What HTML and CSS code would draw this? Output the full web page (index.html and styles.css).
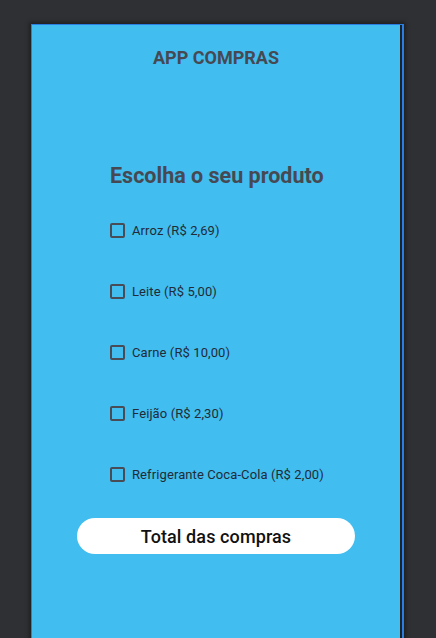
FILE: index.html
```html
<!DOCTYPE html>
<html lang="pt-BR">
<head>
<meta charset="utf-8">
<title>App Compras</title>
<link rel="stylesheet" href="styles.css">
</head>
<body>
<div class="frame">
  <div class="screen">
    <h1 class="app-title">APP COMPRAS</h1>
    <div class="content">
      <h2 class="section-title">Escolha o seu produto</h2>
      <ul class="products">
        <li class="product"><span class="box"></span><span class="label">Arroz (R$ 2,69)</span></li>
        <li class="product"><span class="box"></span><span class="label">Leite (R$ 5,00)</span></li>
        <li class="product"><span class="box"></span><span class="label">Carne (R$ 10,00)</span></li>
        <li class="product"><span class="box"></span><span class="label">Feijão (R$ 2,30)</span></li>
        <li class="product"><span class="box"></span><span class="label">Refrigerante Coca-Cola (R$ 2,00)</span></li>
      </ul>
    </div>
    <button class="total-btn">Total das compras</button>
  </div>
</div>
</body>
</html>
```

FILE: styles.css
```css
html, body {
  margin: 0;
  padding: 0;
  height: 638px;
  overflow: hidden;
  background: #2f3033;
  font-family: Roboto, "Liberation Sans", sans-serif;
}

.frame {
  margin: 24px 0 0 31px;
  width: 370px;
  height: 640px;
  border: 1px solid #2a7de1;
  border-right-width: 2px;
  border-bottom: none;
  box-shadow: 0 0 4px 2px rgba(0, 0, 0, 0.35);
}

.screen {
  height: 100%;
  background: #41bdef;
  border-right: 2px solid #1f2124;
  display: flex;
  flex-direction: column;
  padding-top: 22px;
  box-sizing: border-box;
}

.app-title {
  margin: 0;
  text-align: center;
  font-size: 18px;
  font-weight: 700;
  color: #474952;
  line-height: 21px;
}

.content {
  margin: 95px 0 0 78px;
}

.section-title {
  margin: 0;
  font-size: 21.5px;
  font-weight: 700;
  color: #474952;
  line-height: 25px;
}

.products {
  list-style: none;
  margin: 12px 0 0;
  padding: 0;
}

.product {
  height: 61px;
  display: flex;
  align-items: center;
  gap: 7px;
}

.box {
  width: 15px;
  height: 15px;
  box-sizing: border-box;
  border: 2px solid #4a4c55;
  border-radius: 2px;
}

.label {
  font-size: 13px;
  color: #222b36;
  letter-spacing: 0.1px;
}

.total-btn {
  align-self: center;
  margin-top: 13px;
  width: 278px;
  height: 36px;
  border: none;
  border-radius: 18px;
  background: #ffffff;
  font-family: Roboto, "Liberation Sans", sans-serif;
  font-size: 18px;
  font-weight: 500;
  color: #111111;
  padding: 0;
  letter-spacing: 0.1px;
}
```
